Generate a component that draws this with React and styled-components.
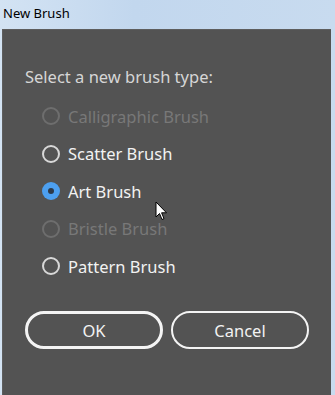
import styled, { createGlobalStyle } from 'styled-components';

const GlobalStyle = createGlobalStyle`
  html, body {
    margin: 0;
    padding: 0;
    background: #c6daef;
  }
  body {
    font-family: "Noto Sans", "Open Sans", sans-serif;
  }
`;

const Window = styled.div`
  width: 335px;
  height: 395px;
  display: flex;
  flex-direction: column;
  overflow: hidden;
  background: linear-gradient(90deg, #d3e3f3 0%, #c2d7ee 40%, #c8dbef 100%);
`;

const TitleBar = styled.div`
  height: 29px;
  display: flex;
  align-items: center;
  padding: 0 0 4px 3px;
  font-family: "Noto Sans", sans-serif;
  font-size: 13px;
  color: #000;
  box-sizing: border-box;
`;

const Panel = styled.div`
  flex: 1;
  margin: 0 4px 0 2px;
  background: #535353;
  border-top: 1px solid #5e5e5e;
  border-left: 1px solid #5e5e5e;
  padding: 36px 0 0 22px;
  box-sizing: border-box;
  position: relative;
`;

const Heading = styled.div`
  font-size: 16.5px;
  color: #d6d6d6;
  line-height: 22px;
  margin-bottom: 17px;
`;

const OptionList = styled.div`
  display: flex;
  flex-direction: column;
  gap: 15.5px;
  padding-left: 17px;
`;

const Option = styled.label`
  display: flex;
  align-items: center;
  gap: 8px;
  height: 22px;
  font-size: 16.5px;
  color: ${p => (p.disabled ? '#787878' : '#f2f2f2')};
`;

const Radio = styled.span`
  width: 18px;
  height: 18px;
  border-radius: 50%;
  box-sizing: border-box;
  flex-shrink: 0;
  display: flex;
  align-items: center;
  justify-content: center;
  border: 2px solid ${p => (p.disabled ? '#6e6e6e' : '#d8d8d8')};
  ${p => p.checked && `
    border: none;
    background: #4da0f0;
    &::after {
      content: '';
      width: 6px;
      height: 6px;
      border-radius: 50%;
      background: #2d3a4a;
    }
  `}
`;

const ButtonRow = styled.div`
  display: flex;
  gap: 8px;
  margin-top: 34px;
`;

const Button = styled.button`
  width: 138px;
  height: 38px;
  border-radius: 19px;
  background: transparent;
  border: ${p => (p.primary ? '3px' : '2px')} solid #f4f4f4;
  color: #f2f2f2;
  font-family: "Noto Sans", sans-serif;
  font-size: 16.5px;
  padding: 0;
  box-sizing: border-box;
`;

const Cursor = styled.svg`
  position: absolute;
  left: 152px;
  top: 171px;
`;

const options = [
  { label: 'Calligraphic Brush', disabled: true },
  { label: 'Scatter Brush' },
  { label: 'Art Brush', checked: true },
  { label: 'Bristle Brush', disabled: true },
  { label: 'Pattern Brush' },
];

export default function App() {
  return (
    <>
      <GlobalStyle />
      <Window>
        <TitleBar>New Brush</TitleBar>
        <Panel>
          <Heading>Select a new brush type:</Heading>
          <OptionList>
            {options.map(o => (
              <Option key={o.label} disabled={o.disabled}>
                <Radio checked={o.checked} disabled={o.disabled} />
                {o.label}
              </Option>
            ))}
          </OptionList>
          <ButtonRow>
            <Button primary>OK</Button>
            <Button>Cancel</Button>
          </ButtonRow>
          <Cursor width="13" height="20" viewBox="0 0 13 20">
            <path d="M1 1 L1 16 L4.5 12.5 L7 18.5 L9 17.6 L6.6 11.8 L11.5 11.8 Z" fill="#fff" stroke="#000" strokeWidth="1" strokeLinejoin="round" />
          </Cursor>
        </Panel>
      </Window>
    </>
  );
}
